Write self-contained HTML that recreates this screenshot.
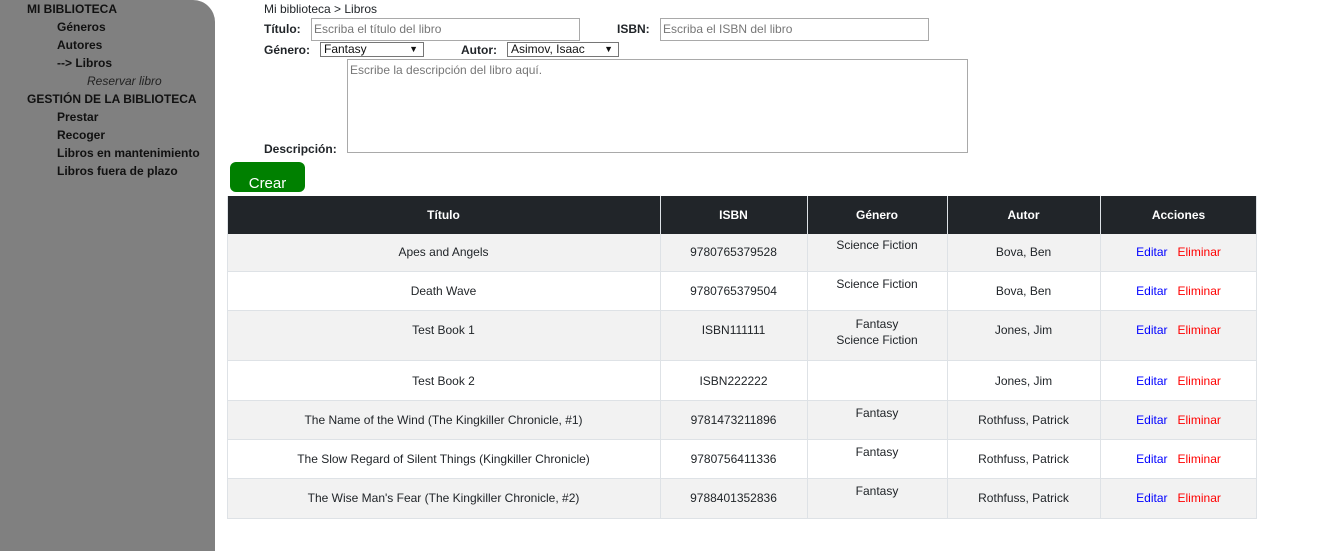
<!DOCTYPE html>
<html><head><meta charset="utf-8"><style>
*{box-sizing:border-box;margin:0;padding:0}
body{width:1319px;height:551px;background:#fff;font-family:"Liberation Sans",Arial,sans-serif;font-size:12px;color:#212529;position:relative;overflow:hidden}
.sb{position:absolute;left:0;top:0;width:215px;height:551px;background:#808080;border-top-right-radius:22px}
.sb div{position:absolute;font-weight:bold;color:#111;font-size:12px;white-space:nowrap}
.a{position:absolute;white-space:nowrap}
.b{font-weight:bold}
.inp{position:absolute;border:1px solid #a9a9a9;background:#fff;color:#777;font-size:12px;padding:3px 2px}
.sel{position:absolute;border:1px solid #767676;background:#fff;color:#111;font-size:12px;padding:0 3px;height:15px;line-height:13px}
.sel span{position:absolute;right:5px;top:0;font-size:9px}
.btn{position:absolute;left:230px;top:162px;width:75px;height:30px;background:#008000;border-radius:6px;color:#fff;font-size:15px;text-align:center;padding-top:14px;line-height:16px}
.hd{position:absolute;left:227px;top:196px;width:1030px;height:38px;background:#212529}
.c{position:absolute;text-align:center;font-size:12px}
.hc{color:#fff;font-weight:bold;top:208px}
.row{position:absolute;left:227px;width:1030px;border-bottom:1px solid #dee2e6}
.vl{position:absolute;top:196px;width:1px;height:323px;background:#dee2e6}
</style></head><body>
<div class="sb">
<div style="left:27px;top:2px">MI BIBLIOTECA</div>
<div style="left:57px;top:20px">Géneros</div>
<div style="left:57px;top:38px">Autores</div>
<div style="left:57px;top:56px">--&gt; Libros</div>
<div style="left:87px;top:74px;font-weight:normal;font-style:italic;color:#222">Reservar libro</div>
<div style="left:27px;top:92px">GESTIÓN DE LA BIBLIOTECA</div>
<div style="left:57px;top:110px">Prestar</div>
<div style="left:57px;top:128px">Recoger</div>
<div style="left:57px;top:146px">Libros en mantenimiento</div>
<div style="left:57px;top:164px">Libros fuera de plazo</div>
</div>
<div class="a" style="left:264px;top:2px">Mi biblioteca &gt; Libros</div>
<div class="a b" style="left:264px;top:22px">Título:</div>
<div class="inp" style="left:311px;top:18px;width:269px;height:23px">Escriba el título del libro</div>
<div class="a b" style="left:617px;top:22px">ISBN:</div>
<div class="inp" style="left:660px;top:18px;width:269px;height:23px">Escriba el ISBN del libro</div>
<div class="a b" style="left:264px;top:43px">Género:</div>
<div class="sel" style="left:320px;top:42px;width:104px">Fantasy<span>▼</span></div>
<div class="a b" style="left:461px;top:43px">Autor:</div>
<div class="sel" style="left:507px;top:42px;width:112px">Asimov, Isaac<span>▼</span></div>
<div class="inp" style="left:347px;top:59px;width:621px;height:94px;padding:3px 2px">Escribe la descripción del libro aquí.</div>
<div class="a b" style="left:264px;top:142px">Descripción:</div>
<div class="btn">Crear</div>
<div class="hd"></div>
<div class="c hc" style="left:227px;width:433px">Título</div>
<div class="c hc" style="left:660px;width:147px">ISBN</div>
<div class="c hc" style="left:807px;width:140px">Género</div>
<div class="c hc" style="left:947px;width:153px">Autor</div>
<div class="c hc" style="left:1100px;width:157px">Acciones</div>

<div class="row" style="top:234px;height:38px;background:#f2f2f2"></div>
<div class="row" style="top:272px;height:39px;background:#fff"></div>
<div class="row" style="top:311px;height:50px;background:#f2f2f2"></div>
<div class="row" style="top:361px;height:40px;background:#fff"></div>
<div class="row" style="top:401px;height:39px;background:#f2f2f2"></div>
<div class="row" style="top:440px;height:39px;background:#fff"></div>
<div class="row" style="top:479px;height:40px;background:#f2f2f2"></div>
<div class="vl" style="left:227px"></div><div class="vl" style="left:660px"></div><div class="vl" style="left:807px"></div><div class="vl" style="left:947px"></div><div class="vl" style="left:1100px"></div><div class="vl" style="left:1256px"></div>

<div class="c" style="left:227px;width:433px;top:245px">Apes and Angels</div>
<div class="c" style="left:660px;width:147px;top:245px">9780765379528</div>
<div class="c" style="left:807px;width:140px;top:238px">Science Fiction</div>
<div class="c" style="left:947px;width:153px;top:245px">Bova, Ben</div>
<div class="c" style="left:1100px;width:157px;top:245px"><span style="color:#00f">Editar</span>&nbsp;&nbsp; <span style="color:#f00">Eliminar</span></div>

<div class="c" style="left:227px;width:433px;top:284px">Death Wave</div>
<div class="c" style="left:660px;width:147px;top:284px">9780765379504</div>
<div class="c" style="left:807px;width:140px;top:277px">Science Fiction</div>
<div class="c" style="left:947px;width:153px;top:284px">Bova, Ben</div>
<div class="c" style="left:1100px;width:157px;top:284px"><span style="color:#00f">Editar</span>&nbsp;&nbsp; <span style="color:#f00">Eliminar</span></div>

<div class="c" style="left:227px;width:433px;top:323px">Test Book 1</div>
<div class="c" style="left:660px;width:147px;top:323px">ISBN111111</div>
<div class="c" style="left:807px;width:140px;top:316px;line-height:16px">Fantasy<br>Science Fiction</div>
<div class="c" style="left:947px;width:153px;top:323px">Jones, Jim</div>
<div class="c" style="left:1100px;width:157px;top:323px"><span style="color:#00f">Editar</span>&nbsp;&nbsp; <span style="color:#f00">Eliminar</span></div>

<div class="c" style="left:227px;width:433px;top:374px">Test Book 2</div>
<div class="c" style="left:660px;width:147px;top:374px">ISBN222222</div>
<div class="c" style="left:947px;width:153px;top:374px">Jones, Jim</div>
<div class="c" style="left:1100px;width:157px;top:374px"><span style="color:#00f">Editar</span>&nbsp;&nbsp; <span style="color:#f00">Eliminar</span></div>

<div class="c" style="left:227px;width:433px;top:413px">The Name of the Wind (The Kingkiller Chronicle, #1)</div>
<div class="c" style="left:660px;width:147px;top:413px">9781473211896</div>
<div class="c" style="left:807px;width:140px;top:406px">Fantasy</div>
<div class="c" style="left:947px;width:153px;top:413px">Rothfuss, Patrick</div>
<div class="c" style="left:1100px;width:157px;top:413px"><span style="color:#00f">Editar</span>&nbsp;&nbsp; <span style="color:#f00">Eliminar</span></div>

<div class="c" style="left:227px;width:433px;top:452px">The Slow Regard of Silent Things (Kingkiller Chronicle)</div>
<div class="c" style="left:660px;width:147px;top:452px">9780756411336</div>
<div class="c" style="left:807px;width:140px;top:445px">Fantasy</div>
<div class="c" style="left:947px;width:153px;top:452px">Rothfuss, Patrick</div>
<div class="c" style="left:1100px;width:157px;top:452px"><span style="color:#00f">Editar</span>&nbsp;&nbsp; <span style="color:#f00">Eliminar</span></div>

<div class="c" style="left:227px;width:433px;top:491px">The Wise Man's Fear (The Kingkiller Chronicle, #2)</div>
<div class="c" style="left:660px;width:147px;top:491px">9788401352836</div>
<div class="c" style="left:807px;width:140px;top:484px">Fantasy</div>
<div class="c" style="left:947px;width:153px;top:491px">Rothfuss, Patrick</div>
<div class="c" style="left:1100px;width:157px;top:491px"><span style="color:#00f">Editar</span>&nbsp;&nbsp; <span style="color:#f00">Eliminar</span></div>
</body></html>
